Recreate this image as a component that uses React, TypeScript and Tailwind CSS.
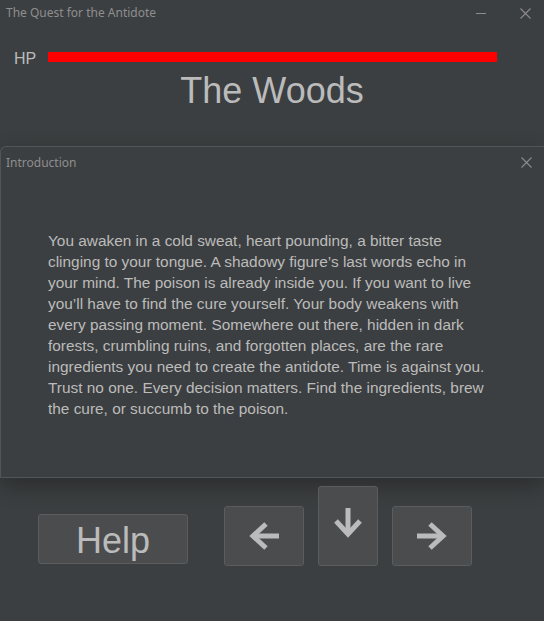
import React from "react";

const lines = [
  "You awaken in a cold sweat, heart pounding, a bitter taste",
  "clinging to your tongue. A shadowy figure’s last words echo in",
  "your mind. The poison is already inside you. If you want to live",
  "you’ll have to find the cure yourself. Your body weakens with",
  "every passing moment. Somewhere out there, hidden in dark",
  "forests, crumbling ruins, and forgotten places, are the rare",
  "ingredients you need to create the antidote. Time is against you.",
  "Trust no one. Every decision matters. Find the ingredients, brew",
  "the cure, or succumb to the poison.",
];

const CloseIcon: React.FC = () => (
  <svg width="11" height="11" viewBox="0 0 11 11" className="block">
    <path d="M0.5 0.5 L10.5 10.5 M10.5 0.5 L0.5 10.5" stroke="#8c8c8c" strokeWidth="1.1" fill="none" />
  </svg>
);

// arrow pointing left, rotated for the others
const Arrow: React.FC<{ rotate?: number }> = ({ rotate = 0 }) => (
  <svg width="32" height="28" viewBox="0 0 32 28" style={{ transform: `rotate(${rotate}deg)` }}>
    <path d="M5 14 H31" stroke="#bbbbbb" strokeWidth="5" fill="none" />
    <path d="M18 2 L5 14 L18 26" stroke="#bbbbbb" strokeWidth="5" fill="none" strokeLinejoin="miter" />
  </svg>
);

const btn = "flex items-center justify-center rounded-[3px] border border-[#5a5c5e] bg-[#4a4c4e]";

export default function App() {
  return (
    <div className="flex h-[621px] w-[544px] flex-col overflow-hidden bg-[#3c3f41] font-['Liberation_Sans',Arial,sans-serif] text-[#bbbbbb]">
      {/* title bar */}
      <div className="flex h-[26px] items-center justify-between pl-[6px] pr-[13px]">
        <span className="font-['Noto_Sans',sans-serif] text-[12px] text-[#8e8e8e]">The Quest for the Antidote</span>
        <div className="flex items-center gap-[34px]">
          <div className="h-px w-[10px] bg-[#8c8c8c]" />
          <CloseIcon />
        </div>
      </div>

      {/* hp */}
      <div className="mt-[22px] flex h-[20px] items-start pl-[14px]">
        <span className="mt-[2px] text-[16px] leading-[18px]">HP</span>
        <div className="ml-[12px] mt-[4px] h-[10px] w-[449px] bg-[#ff0000]" />
      </div>

      <div className="mt-[5px] text-center text-[36px] leading-[36px]">The Woods</div>

      {/* internal frame */}
      <div className="mt-[37px] h-[332px] rounded-tl-[6px] border-y border-l border-[#525557] bg-[#3c3f41] shadow-[0_8px_22px_rgba(0,0,0,0.3)]">
        <div className="flex h-[31px] items-center justify-between pl-[5px] pr-[12px]">
          <span className="font-['Noto_Sans',sans-serif] text-[12px] text-[#8e8e8e]">Introduction</span>
          <CloseIcon />
        </div>
        <div className="pl-[47px] pt-[52px] text-[15.4px] leading-[21px]">
          {lines.map((l) => (
            <div key={l} className="whitespace-nowrap">{l}</div>
          ))}
        </div>
      </div>

      {/* controls */}
      <div className="mt-[8px] flex items-end pl-[38px]">
        <div className={`${btn} mb-[2px] h-[50px] w-[150px] pt-[4px] text-[36px]`}>Help</div>
        <div className={`${btn} ml-[36px] h-[60px] w-[80px]`}>
          <Arrow />
        </div>
        <div className={`${btn} ml-[14px] h-[80px] w-[60px] items-start pt-[22px]`}>
          <Arrow rotate={-90} />
        </div>
        <div className={`${btn} ml-[14px] h-[60px] w-[80px]`}>
          <Arrow rotate={180} />
        </div>
      </div>
    </div>
  );
}
